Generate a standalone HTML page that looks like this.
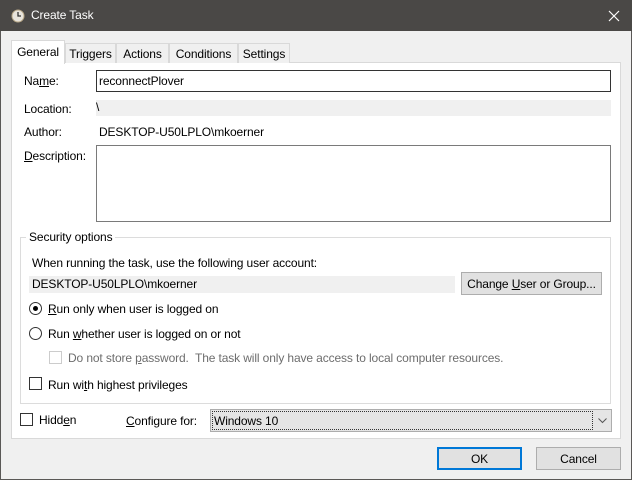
<!DOCTYPE html>
<html><head><style>
*{margin:0;padding:0;box-sizing:border-box}
body{width:632px;height:480px;position:relative;background:#f0f0f0;font-family:"Liberation Sans",sans-serif;font-size:12px;letter-spacing:-0.12px;color:#000;overflow:hidden}
.a{position:absolute;white-space:nowrap}
.bd{border:1px solid #7a7a7a}
u{text-decoration:underline}
.rad{position:absolute;width:13px;height:13px;border:1px solid #333;border-radius:50%;background:#fff}
.chk{position:absolute;width:13px;height:13px;border:1px solid #333;background:#fff}
.btn{position:absolute;background:#e1e1e1;border:1px solid #adadad;text-align:center}
.tab{position:absolute;top:43px;height:20px;background:#f0f0f0;border:1px solid #d9d9d9;border-bottom:none;text-align:center;padding-top:3px}
</style></head><body>
<div class="a" style="left:0;top:0;width:632px;height:480px;border:1px solid #5a5856"></div>
<div class="a" style="left:0;top:0;width:632px;height:31px;background:#4a4846"></div>
<svg class="a" style="left:11px;top:9px" width="14" height="14"><circle cx="7" cy="7" r="6" fill="#e8e4dc" stroke="#b8a888"/><path d="M7 3v4h3" stroke="#333" stroke-width="1.3" fill="none"/></svg>
<div class="a" style="left:31px;top:8px;color:#fff;font-size:12px">Create Task</div>
<svg class="a" style="left:608px;top:10px" width="12" height="12"><path d="M1 1L11 11M11 1L1 11" stroke="#fff" stroke-width="1.2"/></svg>

<div class="a" style="left:11px;top:62px;width:610px;height:377px;background:#fff;border:1px solid #d9d9d9"></div>
<div class="tab" style="left:65px;width:51px">Triggers</div>
<div class="tab" style="left:116px;width:53px">Actions</div>
<div class="tab" style="left:169px;width:69px">Conditions</div>
<div class="tab" style="left:238px;width:52px">Settings</div>
<div class="a" style="left:11px;top:40px;width:54px;height:24px;background:#fff;border:1px solid #d9d9d9;border-bottom:none;text-align:center;padding-top:4px">General</div>

<div class="a" style="left:24px;top:74px">Na<u>m</u>e:</div>
<div class="a" style="left:96px;top:70px;width:515px;height:22px;border:1px solid #333;padding:3px 2px">reconnectPlover</div>
<div class="a" style="left:24px;top:102px">Location:</div>
<div class="a" style="left:96px;top:100px;width:515px;height:16px;background:#f0f0f0;padding:0 0">\</div>
<div class="a" style="left:24px;top:125px">Author:</div>
<div class="a" style="left:99px;top:125px">DESKTOP-U50LPLO\mkoerner</div>
<div class="a" style="left:24px;top:149px"><u>D</u>escription:</div>
<div class="a bd" style="left:96px;top:145px;width:515px;height:77px"></div>

<div class="a" style="left:20px;top:237px;width:591px;height:167px;border:1px solid #dcdcdc"></div>
<div class="a" style="left:26px;top:230px;background:#fff;padding:0 3px">Security options</div>
<div class="a" style="left:32px;top:256px">When running the task, use the following user account:</div>
<div class="a" style="left:29px;top:276px;width:426px;height:17px;background:#f0f0f0;padding:1px 3px">DESKTOP-U50LPLO\mkoerner</div>
<div class="btn" style="left:461px;top:272px;width:141px;height:23px;padding-top:4px">Change <u>U</u>ser or Group...</div>

<div class="rad" style="left:29px;top:302px"></div><div class="a" style="left:33px;top:306px;width:5px;height:5px;border-radius:50%;background:#000"></div>
<div class="a" style="left:48px;top:302px"><u>R</u>un only when user is logged on</div>
<div class="rad" style="left:29px;top:327px"></div>
<div class="a" style="left:48px;top:327px">Run <u>w</u>hether user is logged on or not</div>
<div class="chk" style="left:49px;top:351px;border-color:#ccc"></div>
<div class="a" style="left:68px;top:351px;color:#6d6d6d">Do not store <u>p</u>assword.&nbsp; The task will only have access to local computer resources.</div>
<div class="chk" style="left:29px;top:377px"></div>
<div class="a" style="left:48px;top:378px">Run wi<u>t</u>h highest privileges</div>

<div class="chk" style="left:20px;top:413px"></div>
<div class="a" style="left:39px;top:413px">Hidd<u>e</u>n</div>
<div class="a" style="left:126px;top:414px"><u>C</u>onfigure for:</div>
<div class="a" style="left:210px;top:409px;width:402px;height:23px;background:#e5e5e5;border:1px solid #adadad"></div>
<div class="a" style="left:212px;top:411px;width:381px;height:19px;border:1px dotted #333;padding:2px 1px">Windows 10</div>
<svg class="a" style="left:598px;top:418px" width="9" height="6"><path d="M0.5 0.5L4.5 4.5L8.5 0.5" stroke="#555" fill="none"/></svg>

<div class="btn" style="left:437px;top:447px;width:85px;height:23px;border:2px solid #0078d7;padding-top:3px">OK</div>
<div class="btn" style="left:536px;top:447px;width:85px;height:23px;padding-top:4px">Cancel</div>
</body></html>
